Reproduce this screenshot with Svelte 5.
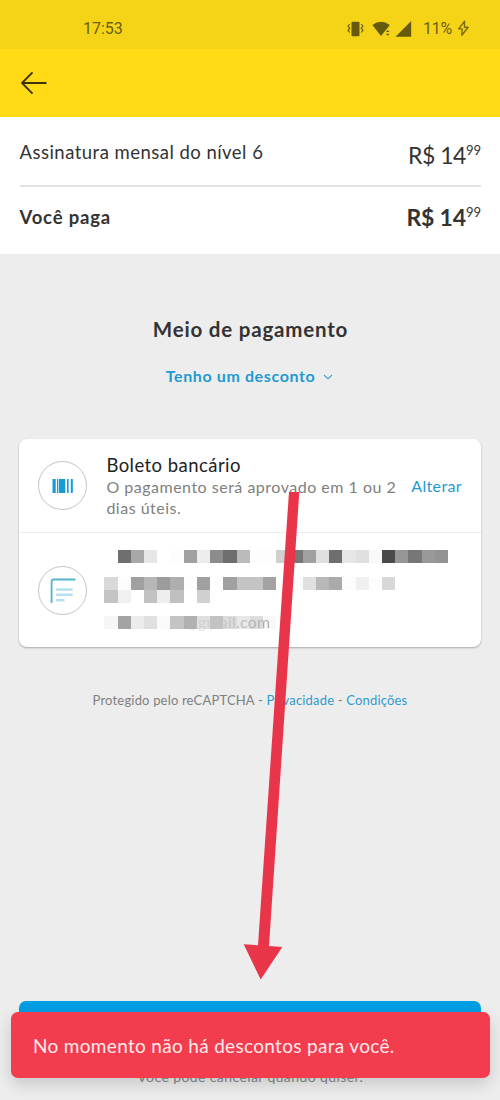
<script>
  const summary = [
    { label: 'Assinatura mensal do nível 6', whole: 'R$ 14', cents: '99', total: false },
    { label: 'Você paga', whole: 'R$ 14', cents: '99', total: true },
  ];

  // Pixelated lines of personal data, one grey level per block ('' = empty).
  const name = ['', '6f', 'a8', 'e6', '', 'fd', 'a0', 'ed', '8c', '6e', 'bb', 'fd', 'fd', 'd0', '77', 'a0', 'e0', '6e', 'e6', 'e0', 'f9', '4a', '96', '77', '99', '93'];
  const address = [
    ['d9', 'fc', 'a0', 'b6', '9c', 'ae', 'fd', 'a0', '', 'a0', 'c4', 'c4', 'a3', '', 'fc', 'e0', 'b8', 'aa', 'fc', 'f0', 'fd', 'd8'],
    ['c4', 'f0', '', 'c2', 'ee', 'c0', '', 'd0'],
  ];
  const email = ['f6', 'a3', 'ec', 'e0', 'fa', 'c4', 'b0', 'e0', 'c2', 'dc', 'e8', 'dc', 'f8'];

  const grey = (v) => (v ? `#${v}${v}${v}` : 'transparent');
</script>

{#snippet blocks(cells)}
  <div class="blocks">
    {#each cells as cell}
      <i style:background={grey(cell)}></i>
    {/each}
  </div>
{/snippet}

<div class="screen">
  <div class="status">
    <span class="clock">17:53</span>
    <div class="tray">
      <svg class="vibrate" width="17" height="16" viewBox="0 0 17 16">
        <rect x="4.5" y="0.8" width="8" height="14.4" rx="1" fill="#65590c" />
        <path d="M2.8 3 L1 5.2 L2.8 7.2 L1 9.3 L2.8 11.5 M14.2 3 L16 5.2 L14.2 7.2 L16 9.3 L14.2 11.5" fill="none" stroke="#65590c" stroke-width="1.1" />
      </svg>
      <svg class="wifi" width="19" height="16" viewBox="0 0 19 16">
        <path d="M0.3 4 Q9 -2.6 17.8 4 L14.5 8.2 L13 10 L9 15 Z" fill="#65590c" />
        <path d="M14 11 L15.8 9 L17.6 11 Z M14 12.8 L15.8 14.8 L17.6 12.8 Z" fill="#65590c" />
      </svg>
      <svg class="signal" width="17" height="16" viewBox="0 0 17 16">
        <path d="M0.5 15.8 L16.2 0 V15.8 Z" fill="#65590c" />
      </svg>
      <span class="battery">11%</span>
      <svg class="bolt" width="13" height="17" viewBox="0 0 13 17">
        <path d="M7.6 1.3 L1.6 8.9 H5.2 L4.8 15.2 L11.2 7.2 H7.4 Z" fill="none" stroke="#7b6c0e" stroke-width="1.4" stroke-linejoin="round" />
      </svg>
    </div>
  </div>

  <header class="bar">
    <svg width="28" height="24" viewBox="0 0 28 24">
      <path d="M12.5 1.3 L2 12 L12.5 22.7 M2 12 H26.5" fill="none" stroke="#3b330a" stroke-width="1.8" stroke-linejoin="round" />
    </svg>
  </header>

  <section class="summary">
    {#each summary as row}
      <div class="line" class:total={row.total}>
        <span class="label">{row.label}</span>
        <span class="price"><b>{row.whole}</b><sup>{row.cents}</sup></span>
      </div>
    {/each}
  </section>

  <h1>Meio de pagamento</h1>
  <div class="discount">
    <span>Tenho um desconto</span>
    <svg width="10" height="6" viewBox="0 0 10 6">
      <path d="M1 1 L5 4.8 L9 1" fill="none" stroke="#2f9fd0" stroke-width="1.1" />
    </svg>
  </div>

  <section class="card">
    <div class="method">
      <div class="round">
        <svg width="22" height="14" viewBox="0 0 22 14" fill="#159bd8">
          <rect x="0.5" width="3.2" height="14" />
          <rect x="5" width="1.3" height="14" />
          <rect x="7" width="6.3" height="14" />
          <rect x="15" width="1.6" height="14" />
          <rect x="18.8" width="2" height="14" />
        </svg>
      </div>
      <div class="info">
        <div class="title">Boleto bancário</div>
        <div class="note">O pagamento será aprovado em 1 ou 2<br />dias úteis.</div>
      </div>
      <span class="change">Alterar</span>
    </div>
    <div class="person">
      <div class="round">
        <svg width="26" height="26" viewBox="0 0 26 26" fill="none">
          <path d="M1.6 25 V3.5 Q1.6 1.5 3.6 1.5 H25.5" stroke="#55b4cf" stroke-width="1.8" />
          <path d="M6.2 11.5 H22.6 M6.2 16.8 H22.6 M6.2 22.3 H14.5" stroke="#b5def0" stroke-width="2.5" />
        </svg>
      </div>
      <div class="hidden">
        <div class="name">{@render blocks(name)}</div>
        {#each address as line}
          {@render blocks(line)}
        {/each}
        <div class="email">
          {@render blocks(email)}
          <span>@gmail.com</span>
        </div>
      </div>
    </div>
  </section>

  <p class="captcha">Protegido pelo reCAPTCHA - <a href="#privacy">Privacidade</a> - <a href="#terms">Condições</a></p>

  <footer>
    <div class="pay"></div>
    <p>Você pode cancelar quando quiser.</p>
  </footer>

  <div class="toast">No momento não há descontos para você.</div>

  <svg class="arrow" width="60" height="490" viewBox="0 0 60 490">
    <path d="M49 2 H59.3 L29 456 L42.3 457 L20.7 489.5 L3.7 454.3 L18 455.2 Z" fill="#e93549" />
  </svg>
</div>

<style>
  :global(body) {
    margin: 0;
  }
  .screen {
    position: relative;
    width: 500px;
    height: 1100px;
    overflow: hidden;
    display: flex;
    flex-direction: column;
    background: #ededed;
    color: #333;
    font-family: Lato, 'Liberation Sans', sans-serif;
    white-space: nowrap;
  }

  .status {
    flex: none;
    height: 49px;
    box-sizing: border-box;
    padding: 8px 30px 0 83px;
    display: flex;
    align-items: center;
    justify-content: space-between;
    background: #f5d418;
    color: #6b5e0e;
    font: 400 16px Roboto, sans-serif;
  }
  .tray {
    display: flex;
    align-items: center;
  }
  .wifi {
    margin-left: 8px;
  }
  .signal {
    margin-left: 4px;
  }
  .battery {
    margin: 0 5px 0 11px;
    letter-spacing: -0.2px;
  }

  .bar {
    flex: none;
    height: 68px;
    padding-left: 20px;
    display: flex;
    align-items: center;
    background: #ffda15;
  }

  .summary {
    flex: none;
    height: 137px;
    padding: 0 19px 0 19.5px;
    background: #fff;
  }
  .line {
    height: 70px;
    box-sizing: border-box;
    display: flex;
    justify-content: space-between;
    border-bottom: 2px solid #e2e2e2;
  }
  .line.total {
    height: 67px;
    border: 0;
  }
  .label {
    padding-top: 23px;
    font-size: 18.5px;
    line-height: 24px;
    letter-spacing: 0.47px;
  }
  .total .label {
    padding-top: 18px;
    font-weight: 700;
    letter-spacing: 0.8px;
  }
  .price {
    display: flex;
    padding-top: 24px;
    font-size: 23px;
    line-height: 28px;
    letter-spacing: -0.5px;
  }
  .price b {
    font-weight: 400;
  }
  .price sup {
    font-size: 13px;
    line-height: 18px;
    letter-spacing: 0;
    vertical-align: top;
  }
  .total .price {
    padding-top: 16px;
    letter-spacing: -0.2px;
  }
  .total .price b {
    font-weight: 700;
  }

  h1 {
    flex: none;
    margin: 61px 0 0;
    padding-left: 1px;
    text-align: center;
    font-size: 20.5px;
    line-height: 28px;
    font-weight: 700;
    letter-spacing: 0.8px;
  }
  .discount {
    flex: none;
    margin-top: 21px;
    height: 22px;
    display: flex;
    align-items: center;
    justify-content: center;
    gap: 8px;
    padding-right: 1px;
    color: #1f9bd1;
    font-size: 16px;
    font-weight: 700;
    letter-spacing: 0.62px;
  }
  .discount svg {
    margin-top: 3px;
  }

  .card {
    flex: none;
    margin: 53px 19px 0 19.4px;
    height: 208px;
    border-radius: 8px;
    background: #fff;
    box-shadow: 0 1px 2px rgba(0, 0, 0, 0.3);
  }
  .method {
    height: 93px;
    display: flex;
    border-bottom: 1px solid #ededed;
  }
  .round {
    flex: none;
    width: 47px;
    height: 47px;
    margin: 22px 0 0 19px;
    border: 1px solid #c4c4c4;
    border-radius: 50%;
    display: flex;
    align-items: center;
    justify-content: center;
  }
  .info {
    padding: 14px 0 0 19px;
  }
  .title {
    color: #222;
    font-size: 18.5px;
    line-height: 24px;
    letter-spacing: 0.45px;
  }
  .note {
    color: #808080;
    font-size: 16px;
    line-height: 20.5px;
    letter-spacing: 0.5px;
  }
  .change {
    margin: 36px 0 0 15px;
    color: #1f9bd1;
    font-size: 16px;
    line-height: 22px;
    letter-spacing: 0.35px;
  }
  .person {
    display: flex;
  }
  .person .round {
    margin-top: 33px;
  }
  .hidden {
    padding: 17px 0 0 17px;
  }
  .name {
    margin-bottom: 13.8px;
  }
  .blocks {
    display: grid;
    grid-template-columns: repeat(26, 13.22px);
    grid-auto-rows: 13.2px;
  }
  .email {
    position: relative;
    margin-top: 12.8px;
  }
  .email span {
    position: absolute;
    left: 80px;
    top: -3px;
    background: linear-gradient(to right, rgba(185, 185, 185, 0.1), #c4c4c4 50%, #ababab);
    background-clip: text;
    color: transparent;
    font-size: 16px;
    line-height: 18px;
    letter-spacing: 0.2px;
  }

  .captcha {
    flex: none;
    margin: 43px 0 0;
    text-align: center;
    color: #808080;
    font-size: 13px;
    line-height: 20px;
    letter-spacing: 0.18px;
  }
  .captcha a {
    color: #2f9bcb;
    text-decoration: none;
  }

  footer {
    margin: auto 19px 14px 19.4px;
  }
  .pay {
    height: 56px;
    border-radius: 7px;
    background: #009ee3;
  }
  footer p {
    margin: 10px 0 0;
    text-align: center;
    color: #888;
    font-size: 14px;
    line-height: 19px;
    letter-spacing: 0.4px;
  }

  .toast {
    position: absolute;
    left: 11px;
    right: 10px;
    top: 1012px;
    height: 66px;
    box-sizing: border-box;
    padding-left: 22px;
    border-radius: 7px;
    background: #f33d4f;
    box-shadow: 0 6px 16px rgba(0, 0, 0, 0.16);
    color: #ffe9eb;
    font-size: 19px;
    line-height: 67px;
    letter-spacing: 0.32px;
  }
  .arrow {
    position: absolute;
    left: 240px;
    top: 490px;
  }
</style>
